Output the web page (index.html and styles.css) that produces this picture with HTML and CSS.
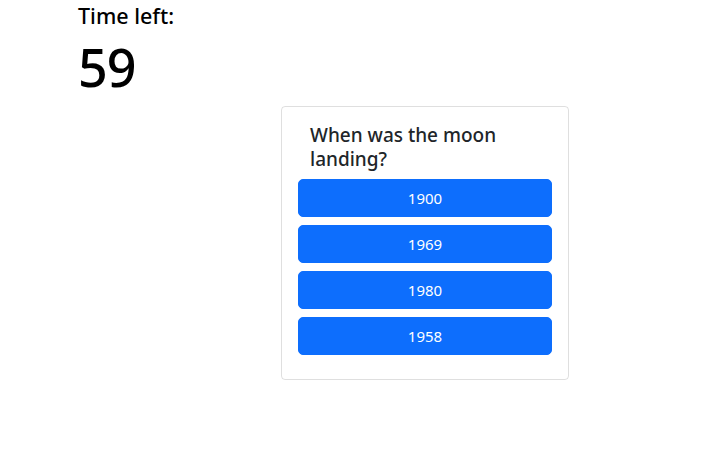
FILE: index.html
```html
<!DOCTYPE html>
<html lang="en">
<head>
<meta charset="utf-8">
<title>Quiz</title>
<link rel="stylesheet" href="styles.css">
</head>
<body>
<div class="page">
  <div class="timer">
    <h4 class="timer-label">Time left:</h4>
    <div class="timer-count">59</div>
  </div>
  <div class="quiz-row">
    <div class="card">
      <h5 class="question">When was the moon landing?</h5>
      <div class="answers">
        <button class="btn">1900</button>
        <button class="btn">1969</button>
        <button class="btn">1980</button>
        <button class="btn">1958</button>
      </div>
    </div>
  </div>
</div>
</body>
</html>
```

FILE: styles.css
```css
* { box-sizing: border-box; }
body {
  margin: 0;
  font-family: "Noto Sans", "Open Sans", sans-serif;
  color: #212529;
  background: #fff;
}
.page { padding-top: 3px; }
.timer { padding-left: 78px; }
.timer-label {
  margin: 0;
  font-size: 21.5px;
  font-weight: 500;
  line-height: 1.2;
  color: #000;
}
.timer-count {
  margin-top: 7px;
  font-size: 52px;
  line-height: 1.2;
  color: #000;
  font-weight: 500;
  letter-spacing: -1px;
}
.quiz-row {
  margin-top: 8px;
  padding-left: 281px;
}
.card {
  width: 288px;
  border: 1px solid rgba(0,0,0,0.125);
  border-radius: 4px;
  padding: 16px 16px 24px;
}
.question {
  margin: 0 0 8px;
  padding: 0 12px;
  font-size: 19px;
  font-weight: 500;
  line-height: 24px;
  color: #212529;
}
.answers {
  display: flex;
  flex-direction: column;
  gap: 8px;
}
.btn {
  display: block;
  width: 100%;
  height: 38px;
  border: 1px solid #0d6efd;
  background: #0d6efd;
  color: #fff;
  border-radius: 5px;
  font-family: "Noto Sans", "Open Sans", sans-serif;
  font-size: 15px;
  line-height: 24px;
  cursor: pointer;
}
```
